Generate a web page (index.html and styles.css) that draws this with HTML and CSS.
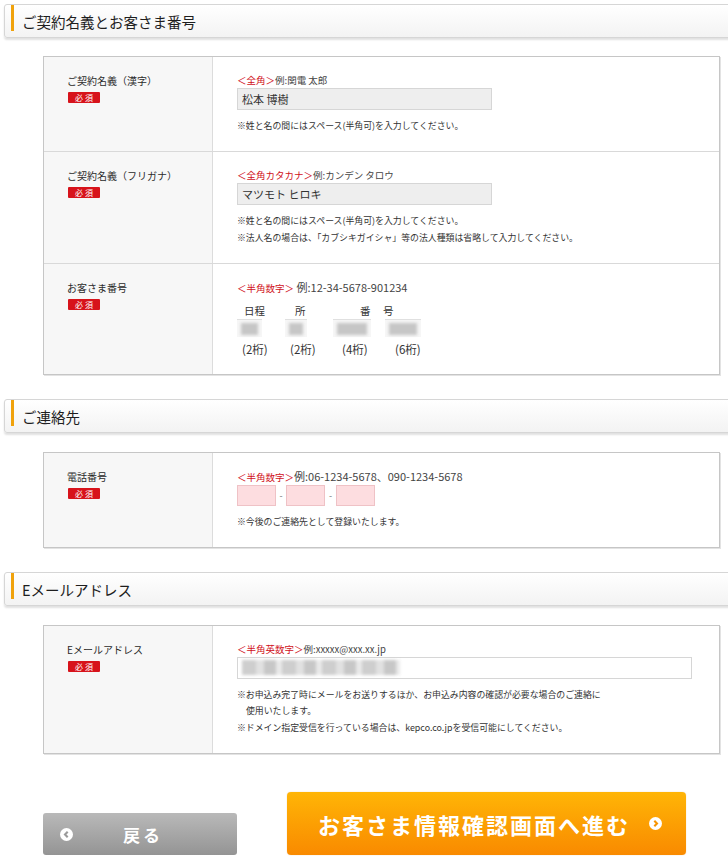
FILE: index.html
```html
<!DOCTYPE html>
<html lang="ja">
<head>
  <meta charset="UTF-8">
  <meta name="viewport" content="width=device-width, initial-scale=1.0">
  <title>お客さま情報入力</title>
  <link rel="stylesheet" href="styles.css">
</head>
<body>
<div class="page">

  <div class="sec-head first"><span class="sec-bar"></span><h2>ご契約名義とお客さま番号</h2></div>
  <div class="form-table first">
    <div class="row">
      <div class="th"><div class="label">ご契約名義（漢字）</div><span class="req">必 須</span></div>
      <div class="td">
        <div class="hint"><span class="red">＜全角＞</span>例:関電 太郎</div>
        <div class="input gray">松本 博樹</div>
        <div class="note">※姓と名の間にはスペース(半角可)を入力してください。</div>
      </div>
    </div>
    <div class="row">
      <div class="th"><div class="label">ご契約名義（フリガナ）</div><span class="req">必 須</span></div>
      <div class="td">
        <div class="hint"><span class="red">＜全角カタカナ＞</span>例:カンデン タロウ</div>
        <div class="input gray">マツモト ヒロキ</div>
        <div class="note">※姓と名の間にはスペース(半角可)を入力してください。<br>※法人名の場合は、「カブシキガイシャ」等の法人種類は省略して入力してください。</div>
      </div>
    </div>
    <div class="row">
      <div class="th"><div class="label">お客さま番号</div><span class="req">必 須</span></div>
      <div class="td">
        <div class="hint"><span class="red">＜半角数字＞</span><span class="big"> 例:12-34-5678-901234</span></div>
        <div class="num-grid">
          <div class="num-col">
            <div class="num-head">日程</div>
            <div class="nbox"><span class="nblur"></span></div>
            <div class="num-digit">(2桁)</div>
          </div>
          <div class="num-col">
            <div class="num-head">所</div>
            <div class="nbox"><span class="nblur"></span></div>
            <div class="num-digit">(2桁)</div>
          </div>
          <div class="num-col">
            <div class="num-head">番</div>
            <div class="nbox"><span class="nblur"></span></div>
            <div class="num-digit">(4桁)</div>
          </div>
          <div class="num-col">
            <div class="num-head">号</div>
            <div class="nbox"><span class="nblur"></span></div>
            <div class="num-digit">(6桁)</div>
          </div>
        </div>
      </div>
    </div>
  </div>

  <div class="sec-head"><span class="sec-bar"></span><h2>ご連絡先</h2></div>
  <div class="form-table">
    <div class="row">
      <div class="th"><div class="label">電話番号</div><span class="req">必 須</span></div>
      <div class="td">
        <div class="hint"><span class="red">＜半角数字＞</span><span class="big">例:06-1234-5678、090-1234-5678</span></div>
        <div class="tel">
          <span class="input pink"></span><span class="dash">-</span><span class="input pink"></span><span class="dash">-</span><span class="input pink"></span>
        </div>
        <div class="note">※今後のご連絡先として登録いたします。</div>
      </div>
    </div>
  </div>

  <div class="sec-head"><span class="sec-bar"></span><h2>Eメールアドレス</h2></div>
  <div class="form-table">
    <div class="row">
      <div class="th"><div class="label">Eメールアドレス</div><span class="req">必 須</span></div>
      <div class="td">
        <div class="hint"><span class="red">＜半角英数字＞</span>例:xxxxx@xxx.xx.jp</div>
        <div class="input mail"><span class="mblur"></span></div>
        <div class="note hang">※お申込み完了時にメールをお送りするほか、お申込み内容の確認が必要な場合のご連絡に<br>使用いたします。</div>
        <div class="note">※ドメイン指定受信を行っている場合は、kepco.co.jpを受信可能にしてください。</div>
      </div>
    </div>
  </div>

  <div class="buttons">
    <a href="#" class="btn back">
      <svg width="13" height="13" viewBox="0 0 13 13"><circle cx="6.5" cy="6.5" r="6.5" fill="#fff"/><path d="M7.7 3.7 5 6.5l2.7 2.8" fill="none" stroke="#9b9b9b" stroke-width="2.1"/></svg>
      <span>戻る</span>
    </a>
    <a href="#" class="btn next">
      <span>お客さま情報確認画面へ進む</span>
      <svg width="13" height="13" viewBox="0 0 13 13"><circle cx="6.5" cy="6.5" r="6.5" fill="#fff"/><path d="M5.3 3.7 8 6.5l-2.7 2.8" fill="none" stroke="#f79400" stroke-width="2.1"/></svg>
    </a>
  </div>

</div>
</body>
</html>
```

FILE: styles.css
```css
* { box-sizing: border-box; }
body {
  margin: 0;
  background: #ffffff;
  color: #333333;
  font-family: "Noto Sans CJK JP", "Noto Sans", sans-serif;
  overflow-x: hidden;
}
.page { padding: 4px 0 20px 4px; }

/* section heading */
.sec-head {
  display: flex;
  height: 34px;
  margin: 24px -14px 0 0;
  border: 1px solid #d6d6d6;
  border-radius: 3px;
  background: linear-gradient(#ffffff, #f3f3f3);
  box-shadow: 0 2px 2px rgba(0, 0, 0, .12);
}
.sec-head.first { margin-top: 0; }
.sec-bar { width: 3px; height: 26px; margin-left: 6px; background: #f0a20c; }
.sec-head h2 {
  margin: 0 0 0 8px;
  padding-top: 7px;
  font-size: 14.5px;
  font-weight: normal;
  line-height: 20px;
  color: #1e1e1e;
}

/* form table */
.form-table {
  width: 677px;
  margin: 19px 0 0 39px;
  border: 1px solid #c6c6c6;
  box-shadow: 1px 1px 0 #e3e3e3;
}
.form-table.first { margin-top: 18px; }
.row { display: grid; grid-template-columns: 169px 1fr; border-top: 1px solid #d9d9d9; }
.row:first-child { border-top: 0; }
.th { background: #f7f7f7; border-right: 1px solid #dcdcdc; padding: 16px 0 0 23px; }
.label { font-size: 10px; line-height: 16px; color: #2a2a2a; }
.req {
  display: block;
  width: 32px;
  margin: 3px 0 0 1px;
  background: #d7131b;
  color: #ffffff;
  font-size: 8px;
  line-height: 11px;
  text-align: center;
  border-radius: 1px;
}
.td { padding: 16px 24px 17px; }
.hint { font-size: 9.5px; line-height: 14px; color: #444444; }
.hint .red { color: #d0101a; }
.hint .big { font-size: 11px; }
.input {
  display: block;
  height: 22px;
  margin-top: 1px;
  border: 1px solid #d6d6d6;
  font-size: 11px;
  line-height: 20px;
  padding-left: 4px;
  color: #333333;
}
.input.gray { width: 255px; background: #eeeeee; }
.input.mail { width: 455px; background: #ffffff; padding-top: 2px; }
.mblur {
  display: block;
  width: 158px;
  height: 15px;
  background:
    repeating-linear-gradient(90deg, #c2c2c2 0 14px, #dadada 14px 22px, #bababa 22px 34px, #e4e4e4 34px 40px);
  filter: blur(1.6px);
  opacity: .8;
}
.note { margin-top: 8px; font-size: 8.9px; line-height: 16.3px; color: #333333; }
.note + .note { margin-top: 0; }
.note.hang { padding-left: 1em; text-indent: -1em; }

/* customer number */
.num-grid { display: grid; grid-template-columns: 48px 48px 47px 50px; margin-top: 8px; }
.num-head { font-size: 10.5px; line-height: 16px; color: #333333; }
.nbox { height: 18px; border-top: 1px solid #e0e0e0; background: #f6f6f6; padding: 3px 4px 0; }
.nblur { display: block; height: 12px; background: #c6c6c6; filter: blur(1.5px); }
.num-digit { margin-top: 4px; font-size: 11.5px; line-height: 16px; color: #333333; }
.num-col:nth-child(1) .num-head { margin-left: 7px; }
.num-col:nth-child(1) .nbox { width: 25px; }
.num-col:nth-child(1) .num-digit { margin-left: 5px; }
.num-col:nth-child(2) .num-head { margin-left: 10px; }
.num-col:nth-child(2) .nbox { width: 22px; }
.num-col:nth-child(2) .num-digit { margin-left: 5px; }
.num-col:nth-child(3) .num-head { margin-left: 27px; }
.num-col:nth-child(3) .nbox { width: 38px; }
.num-col:nth-child(3) .num-digit { margin-left: 9px; }
.num-col:nth-child(4) .num-head { margin-left: 3px; }
.num-col:nth-child(4) .nbox { width: 36px; margin-left: 5px; }
.num-col:nth-child(4) .num-digit { margin-left: 15px; }

/* telephone */
.tel { display: flex; margin-top: 1px; }
.input.pink { width: 39px; height: 21px; margin: 0; background: #fddde0; border-color: #efc2c6; }
.dash { width: 10px; text-align: center; font-size: 9px; line-height: 21px; color: #777777; }
.dash + .input.pink + .dash { width: 11px; }

/* buttons */
.buttons { display: flex; align-items: flex-end; gap: 50px; margin: 38px 0 0 39px; }
.btn { display: flex; align-items: center; color: #ffffff; text-decoration: none; font-weight: bold; }
.btn svg { flex: none; }
.btn.back {
  width: 194px;
  height: 42px;
  padding-left: 17px;
  border-radius: 3px;
  background: linear-gradient(#b9b9b9, #949494);
  font-size: 17px;
  letter-spacing: 3px;
}
.btn.back span { margin-left: 50px; }
.btn.next {
  width: 399px;
  height: 63px;
  padding-left: 31px;
  border-radius: 4px;
  background: linear-gradient(#ffb506, #f98a00);
  box-shadow: 0 0 1px rgba(200, 120, 0, .5);
  font-size: 22px;
  letter-spacing: 2px;
}
.btn.next span { margin-right: 19px; }
```
